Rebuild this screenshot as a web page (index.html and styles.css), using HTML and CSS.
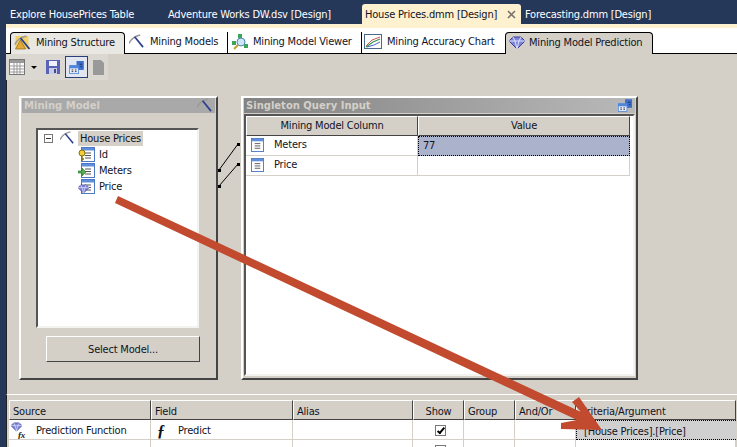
FILE: index.html
```html
<!DOCTYPE html>
<html lang="en">
<head>
    <meta charset="UTF-8">
    <meta name="viewport" content="width=device-width, initial-scale=1.0">
    <title>House Prices.dmm [Design]</title>
    <link rel="stylesheet" href="styles.css">
</head>
<body>
    <svg class="defs" width="0" height="0">
        <defs>
            <symbol id="pick" viewBox="0 0 16 16">
                <path d="M0 10 Q3 3 12 1" fill="none" stroke="#9a9a9a" stroke-width="1.6"/>
                <path d="M6 3 L15 14" fill="none" stroke="#2a3f8f" stroke-width="1.8"/>
            </symbol>
            <symbol id="gem" viewBox="0 0 16 14">
                <path d="M4 1 H12 L16 5 L8 13 L0 5 Z" fill="#7f84d8" stroke="#3a3f90" stroke-width="1"/>
                <path d="M0 5 H16 M4 1 L6 5 L8 13 L10 5 L12 1" fill="none" stroke="#dfe2ff" stroke-width="1"/>
            </symbol>
            <symbol id="col" viewBox="0 0 14 15">
                <rect x="0.5" y="0.5" width="13" height="14" fill="#fff" stroke="#4d78c4"/>
                <rect x="1" y="1" width="12" height="2.5" fill="#5f8fdc"/>
                <path d="M4 6 H10 M4 8.5 H10 M4 11 H10" stroke="#555" stroke-width="1"/>
            </symbol>
            <symbol id="tiles" viewBox="0 0 18 16">
                <rect x="9" y="0" width="9" height="11" fill="#3b6fc9"/>
                <rect x="0" y="5" width="12" height="11" fill="#4f86dc"/>
                <rect x="1" y="9" width="10" height="6" fill="#e8ecf6"/>
                <path d="M3 11 H5 M7 11 H9 M3 13 H5 M7 13 H9 M13 4 H16 M14 7 H16" stroke="#223" stroke-width="1"/>
            </symbol>
        </defs>
    </svg>

    <nav class="doc-tabs">
        <span class="doc-tab tab-explore">Explore HousePrices Table</span>
        <span class="doc-tab tab-dsv">Adventure Works DW.dsv [Design]</span>
        <span class="doc-tab active">House Prices.dmm [Design]
            <svg class="close" width="9" height="9" viewBox="0 0 9 9"><path d="M1 1 L8 8 M8 1 L1 8" stroke="#77736a" stroke-width="1.6"/></svg>
        </span>
        <span class="doc-tab tab-forecast">Forecasting.dmm [Design]</span>
    </nav>

    <div class="page">
        <div class="design-tabs">
            <div class="design-tab current w-structure">
                <svg class="tab-icon" width="17" height="16" viewBox="0 0 16 16">
                    <path d="M1 1 H14 V14 H1 Z" fill="#f2d06a"/>
                    <path d="M1 14 L6 5 L11 14 Z" fill="#e3a93a" stroke="#8a6a1c" stroke-width=".7"/>
                    <use href="#pick" width="16" height="16"/>
                </svg>
                Mining Structure
            </div>
            <div class="design-tab w-models">
                <svg class="tab-icon" width="15" height="15"><use href="#pick" width="15" height="15"/></svg>
                Mining Models
            </div>
            <div class="design-tab w-viewer">
                <svg class="tab-icon" width="16" height="16" viewBox="0 0 16 16">
                    <rect x="6" y="0" width="4" height="4" fill="#3aa655"/>
                    <rect x="0" y="7" width="4" height="4" fill="#3aa655"/>
                    <rect x="12" y="10" width="4" height="4" fill="#3aa655"/>
                    <circle cx="9" cy="8" r="4" fill="#cfe6f7" stroke="#4d88b8"/>
                    <path d="M6 11 L2 15" stroke="#c9a227" stroke-width="2"/>
                </svg>
                Mining Model Viewer
            </div>
            <div class="design-tab w-chart">
                <svg class="tab-icon" width="18" height="15" viewBox="0 0 18 15">
                    <rect x="0.5" y="0.5" width="17" height="14" fill="#fff" stroke="#4a6a8a"/>
                    <path d="M2 12 L8 6 L16 3" fill="none" stroke="#c55" stroke-width="1"/>
                    <path d="M2 13 L9 8 L16 5" fill="none" stroke="#3a9a4a" stroke-width="1.2"/>
                    <path d="M3 13 L10 11 L16 8" fill="none" stroke="#46c" stroke-width="1"/>
                </svg>
                Mining Accuracy Chart
            </div>
            <div class="design-tab current w-prediction">
                <svg class="tab-icon" width="16" height="14"><use href="#gem" width="16" height="14"/></svg>
                Mining Model Prediction
            </div>
        </div>

        <div class="toolbar">
            <div class="tool-group">
                <svg width="16" height="16" viewBox="0 0 16 16">
                    <rect x="0.5" y="0.5" width="15" height="15" fill="#fff" stroke="#777"/>
                    <rect x="1" y="1" width="14" height="3" fill="#999"/>
                    <path d="M1 7 H15 M1 10 H15 M1 13 H15 M5 4 V15 M8 4 V15 M11 4 V15" stroke="#999"/>
                </svg>
                <span class="caret"></span>
                <svg class="save" width="14" height="14" viewBox="0 0 14 14">
                    <rect width="14" height="14" fill="#5a62b8"/>
                    <rect x="3" y="1" width="8" height="5" fill="#f0f0f8"/>
                    <rect x="3" y="8" width="8" height="6" fill="#c8cbe4"/>
                    <rect x="8" y="9" width="2" height="4" fill="#444a90"/>
                </svg>
                <span class="tool-btn"><svg width="15" height="13"><use href="#tiles" width="15" height="13"/></svg></span>
                <svg width="11" height="15" viewBox="0 0 11 15"><path d="M0 0 H8 L11 3 V15 H0 Z" fill="#999"/></svg>
            </div>
        </div>

        <div class="canvas">
            <section class="panel model-panel">
                <h2 class="panel-title">Mining Model<svg class="title-icon" width="15" height="15"><use href="#pick" width="15" height="15"/></svg></h2>
                <div class="tree">
                    <div class="tree-row root">
                        <span class="expander"></span>
                        <svg class="pick" width="14" height="14"><use href="#pick" width="14" height="14"/></svg>
                        <span class="selected">House Prices</span>
                    </div>
                    <div class="tree-row leaf">
                        <svg width="17" height="15" viewBox="0 0 17 15">
                            <use href="#col" x="3" width="14" height="15"/>
                            <circle cx="4" cy="6" r="3" fill="#f2cf3a" stroke="#8a6f10"/>
                            <path d="M4 9 V14 M4 12 H6" stroke="#8a6f10" stroke-width="1.4"/>
                        </svg>
                        Id
                    </div>
                    <div class="tree-row leaf">
                        <svg width="17" height="15" viewBox="0 0 17 15">
                            <use href="#col" x="3" width="14" height="15"/>
                            <path d="M0 8 H4 V5 L8 9 L4 13 V10 H0 Z" fill="#4fb04f" stroke="#2a702a" stroke-width=".6"/>
                        </svg>
                        Meters
                    </div>
                    <div class="tree-row leaf">
                        <svg width="17" height="15" viewBox="0 0 17 15">
                            <use href="#col" x="3" width="14" height="15"/>
                            <use href="#gem" x="0" y="5" width="11" height="10"/>
                        </svg>
                        Price
                    </div>
                </div>
                <button class="select-btn">Select Model...</button>
            </section>

            <svg class="links" width="23" height="60" viewBox="0 0 23 60">
                <path d="M1 40 L20 14 M1 56 L20 34" stroke="#000" stroke-width="1"/>
                <path d="M0 39 h3 v3 h-3 Z M19 13 h3 v3 h-3 Z M0 55 h3 v3 h-3 Z M19 33 h3 v3 h-3 Z" fill="#000"/>
            </svg>

            <section class="panel query-panel">
                <h2 class="panel-title">Singleton Query Input<svg class="title-icon" width="14" height="13"><use href="#tiles" width="14" height="13"/></svg></h2>
                <div class="input-box">
                    <div class="input-grid">
                        <div class="head">Mining Model Column</div>
                        <div class="head">Value</div>
                        <div class="cell"><svg width="13" height="14"><use href="#col" width="13" height="14"/></svg>Meters</div>
                        <div class="cell value">77</div>
                        <div class="cell"><svg width="13" height="14"><use href="#col" width="13" height="14"/></svg>Price</div>
                        <div class="cell"></div>
                    </div>
                </div>
            </section>
        </div>

        <div class="query-grid">
            <div class="head left">Source</div>
            <div class="head left">Field</div>
            <div class="head left">Alias</div>
            <div class="head">Show</div>
            <div class="head left">Group</div>
            <div class="head left">And/Or</div>
            <div class="head left">Criteria/Argument</div>

            <div class="cell fn-cell">
                <svg class="fn-icon" width="16" height="17" viewBox="0 0 16 17">
                    <use href="#gem" width="11" height="10"/>
                    <text x="7" y="16" class="fx">fx</text>
                </svg>
                Prediction Function
            </div>
            <div class="cell predict-cell"><span class="func">ƒ</span>Predict</div>
            <div class="cell"></div>
            <div class="cell center"><span class="check checked"></span></div>
            <div class="cell"></div>
            <div class="cell"></div>
            <div class="cell criteria">[House Prices].[Price]</div>

            <div class="cell"></div>
            <div class="cell"></div>
            <div class="cell"></div>
            <div class="cell center"><span class="check"></span></div>
            <div class="cell"></div>
            <div class="cell"></div>
            <div class="cell"></div>
        </div>
    </div>

    <!-- annotation drawn over the screenshot -->
    <svg class="arrow" width="737" height="447" viewBox="0 0 737 447">
        <path d="M118 196 L581 412 L572 402 L579 397 L602 430 L561 429 L561 423 L577 420 L115 203 Z" fill="#c14a2f"/>
    </svg>
</body>
</html>
```

FILE: styles.css
```css
body, html {
    margin: 0;
    padding: 0;
    height: 100%;
    overflow: hidden;
    font-family: 'DejaVu Sans Condensed', 'DejaVu Sans', sans-serif;
    font-stretch: condensed;
    font-size: 11px;
    letter-spacing: -0.2px;
    color: #10131f;
}
body {
    background-color: #26385a;
    position: relative;
}
svg {
    flex: none;
}
.defs {
    position: absolute;
}
.doc-tabs {
    display: flex;
    align-items: flex-end;
    height: 24px;
    padding-left: 10px;
    color: #fff;
}
.doc-tab {
    height: 20px;
    line-height: 21px;
    white-space: nowrap;
}
.tab-explore {
    width: 158px;
}
.tab-dsv {
    width: 194px;
}
.doc-tab.active {
    width: 156px;
    padding-left: 3px;
    background-color: #fdf1d0;
    border-radius: 3px 3px 0 0;
    color: #10131f;
    display: flex;
    align-items: center;
}
.close {
    margin-left: auto;
    margin-right: 5px;
}
.tab-forecast {
    margin-left: 4px;
}

.page {
    margin-left: 6px;
    height: 423px;
    background-color: #d4d0c8;
    overflow: hidden;
}
.design-tabs {
    display: flex;
    align-items: flex-end;
    height: 25px;
    padding-left: 4px;
    background-color: #fff;
    border-top: 4px solid #fdf1d0;
    border-bottom: 1px solid #000;
}
.design-tab {
    display: flex;
    align-items: center;
    gap: 6px;
    box-sizing: border-box;
    height: 21px;
    padding: 0 0 2px 4px;
    white-space: nowrap;
    border-right: 1px solid #000;
}
.design-tab.current {
    height: 22px;
    margin-bottom: -1px;
    border: 1px solid #000;
    border-bottom: 0;
    border-radius: 4px 4px 0 0;
    background-color: #e9e7e1;
}
.w-structure { width: 115px; gap: 5px; padding-left: 3px; }
.w-models { width: 103px; }
.w-viewer { width: 134px; gap: 5px; }
.w-chart { width: 143px; gap: 5px; padding-left: 2px; border-right: 0; }
.design-tab.w-prediction {
    width: 148px;
    gap: 4px;
    padding-left: 3px;
    background-color: #d4d0c8;
}
.toolbar {
    height: 26px;
    display: flex;
}
.tool-group {
    display: flex;
    align-items: center;
    padding: 0 4px 0 3px;
    background-color: #dbd8d1;
}
.caret {
    width: 0;
    height: 0;
    margin: 0 9px 0 6px;
    border: 3px solid transparent;
    border-top: 3px solid #000;
    border-bottom: 0;
}
.save {
    margin-right: 5px;
}
.tool-btn {
    display: flex;
    align-items: center;
    justify-content: center;
    box-sizing: border-box;
    width: 23px;
    height: 22px;
    margin-right: 5px;
    background-color: #e2e6f0;
    border: 1px solid #2c3e78;
}

.canvas {
    display: flex;
    align-items: flex-start;
    box-sizing: border-box;
    height: 315px;
    padding: 16px 0 0 12px;
    border-left: 1px solid #222;
    border-bottom: 1px solid #fff;
}
.panel {
    box-sizing: border-box;
    height: 284px;
    border: 2px solid;
    border-color: #fff #444 #444 #fff;
    display: flex;
    flex-direction: column;
}
.panel-title {
    display: flex;
    align-items: center;
    justify-content: space-between;
    height: 15px;
    margin: 0 1px;
    padding: 0 2px;
    font-family: 'DejaVu Sans', sans-serif;
    font-stretch: normal;
    font-size: 10px;
    font-weight: bold;
    letter-spacing: 0;
    color: #d4d0c8;
}
.title-icon {
    margin-right: 1px;
}
.model-panel {
    width: 199px;
}
.model-panel .panel-title {
    background-color: #a9a9a9;
}
.query-panel {
    width: 397px;
}
.query-panel .panel-title {
    background: linear-gradient(to right, #828282, #b9b9b9);
}
.tree {
    box-sizing: border-box;
    width: 163px;
    height: 200px;
    margin: 15px 0 0 15px;
    background-color: #fff;
    border: 2px solid;
    border-color: #555 #f4f3f0 #f4f3f0 #555;
}
.tree-row {
    display: flex;
    align-items: center;
    height: 16px;
}
.root {
    padding-left: 6px;
}
.expander {
    box-sizing: border-box;
    width: 9px;
    height: 9px;
    margin: 1px 7px 0 0;
    border: 1px solid #777;
    background: linear-gradient(#333, #333) center / 5px 1px no-repeat;
}
.pick {
    margin-right: 4px;
}
.selected {
    padding: 1px 2px;
    background-color: #d4d0c8;
}
.leaf {
    gap: 4px;
    padding-left: 40px;
}
.select-btn {
    box-sizing: border-box;
    width: 154px;
    height: 26px;
    margin: 8px 0 0 25px;
    padding: 0;
    font: inherit;
    letter-spacing: inherit;
    color: inherit;
    background-color: #d4d0c8;
    border: 1px solid;
    border-color: #fff #444 #444 #fff;
}
.links {
    width: 23px;
    margin-top: 34px;
}
.input-box {
    box-sizing: border-box;
    flex: 1;
    margin: 1px 1px 2px 1px;
    background-color: #fff;
    border: 2px solid;
    border-color: #555 #f4f3f0 #f4f3f0 #555;
}
.input-grid {
    display: grid;
    grid-template-columns: 172px 212px;
    grid-auto-rows: 20px;
}
.head {
    box-sizing: border-box;
    display: flex;
    align-items: center;
    justify-content: center;
    background-color: #d4d0c8;
    border: 1px solid;
    border-color: #fff #444 #444 #fff;
}
.input-grid .head {
    padding-bottom: 2px;
}
.head.left {
    justify-content: flex-start;
    padding-left: 3px;
}
.cell {
    box-sizing: border-box;
    display: flex;
    align-items: center;
    gap: 10px;
    background-color: #fff;
    border-right: 1px solid #d4d0c8;
    border-bottom: 1px solid #d4d0c8;
}
.input-grid .cell {
    padding: 0 0 2px 5px;
}
.input-grid .value {
    padding-left: 4px;
    background-color: #abb3cc;
    border: 1px dotted #000;
}

.query-grid {
    display: grid;
    grid-template-columns: 142px 142px 120px 51px 51px 61px 160px;
    grid-auto-rows: 20px;
    padding: 5px 0 0 2px;
    border-left: 1px solid #222;
}
.query-grid .head {
    height: 20px;
    padding-top: 2px;
}
.query-grid .cell {
    padding: 2px 0 0 4px;
}
.center {
    justify-content: center;
}
.query-grid .fn-cell {
    gap: 9px;
    padding-left: 2px;
}
.predict-cell {
    gap: 10px;
}
.fx {
    font-family: 'Liberation Serif', serif;
    font-size: 9px;
    font-style: italic;
    font-weight: bold;
    fill: #222;
}
.func {
    width: 11px;
    margin-left: 2px;
    font-family: 'Liberation Serif', serif;
    font-size: 16px;
    font-weight: bold;
    font-style: italic;
}
.check {
    box-sizing: border-box;
    position: relative;
    display: block;
    width: 11px;
    height: 11px;
    background-color: #fff;
    border: 1px solid #777;
}
.check.checked::after {
    content: "";
    position: absolute;
    left: 3px;
    top: 0;
    width: 2px;
    height: 6px;
    border: solid #000;
    border-width: 0 2px 2px 0;
    transform: rotate(40deg);
}
.query-grid .criteria {
    padding-left: 7px;
    background-color: #d0d0d0;
    border: 1px dotted #000;
    border-right: 0;
}
.arrow {
    position: absolute;
    left: 0;
    top: 0;
    pointer-events: none;
}
```
